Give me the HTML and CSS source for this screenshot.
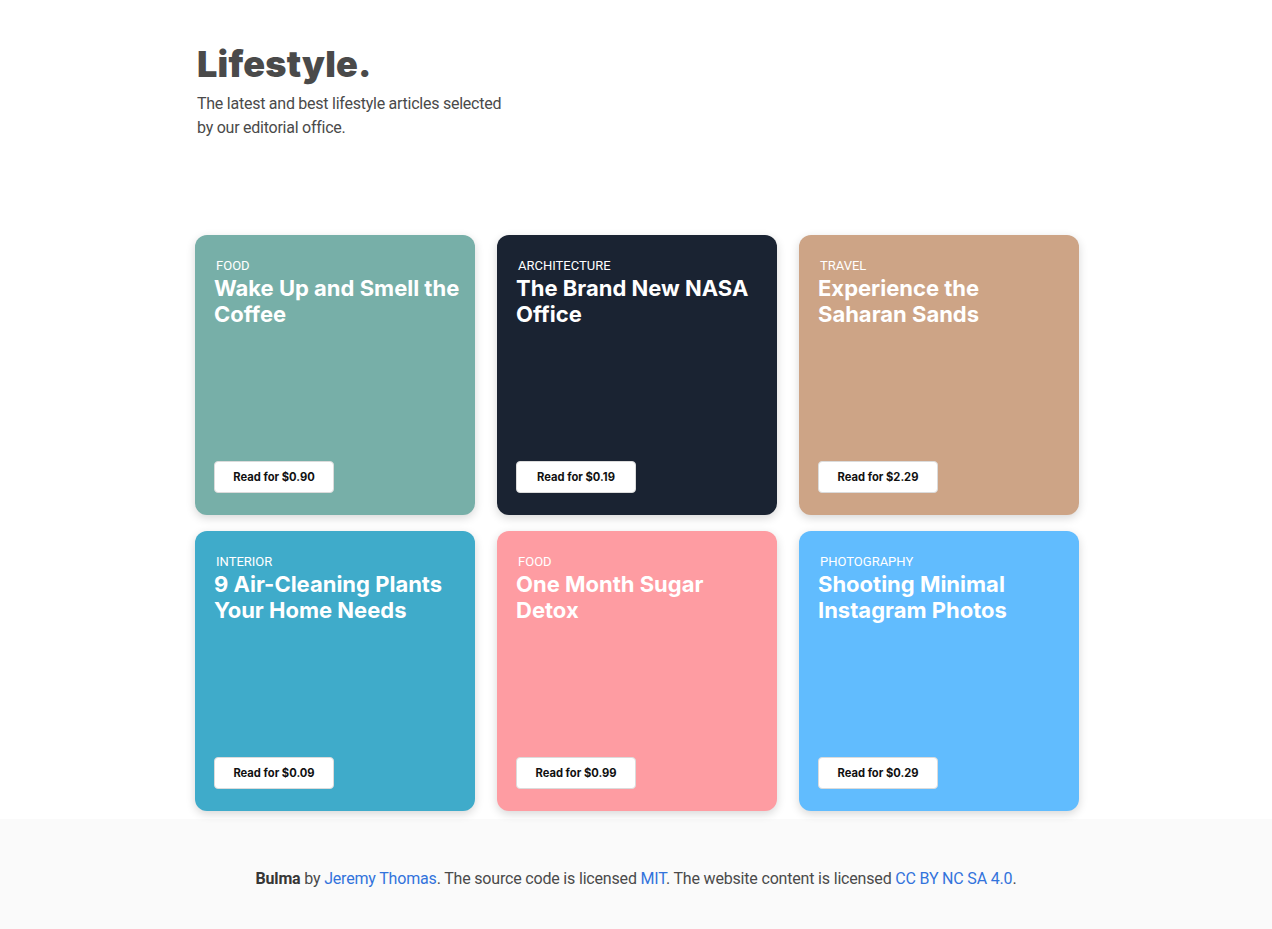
FILE: index.html
```html
<!DOCTYPE html>
<html lang="en">
<head>
<meta charset="utf-8">
<title>Lifestyle.</title>
<link rel="stylesheet" href="styles.css">
</head>
<body>
<main class="page">
  <header class="intro">
    <h1 class="intro-title">Lifestyle.</h1>
    <p class="intro-text">The latest and best lifestyle articles selected by our editorial office.</p>
  </header>
  <section class="grid">
    <article class="card card-teal">
      <span class="card-cat">FOOD</span>
      <h2 class="card-title">Wake Up and Smell the Coffee</h2>
      <button class="card-btn">Read for $0.90</button>
    </article>
    <article class="card card-dark">
      <span class="card-cat">ARCHITECTURE</span>
      <h2 class="card-title">The Brand New NASA Office</h2>
      <button class="card-btn">Read for $0.19</button>
    </article>
    <article class="card card-tan">
      <span class="card-cat">TRAVEL</span>
      <h2 class="card-title">Experience the Saharan Sands</h2>
      <button class="card-btn">Read for $2.29</button>
    </article>
    <article class="card card-blue">
      <span class="card-cat">INTERIOR</span>
      <h2 class="card-title">9 Air-Cleaning Plants Your Home Needs</h2>
      <button class="card-btn">Read for $0.09</button>
    </article>
    <article class="card card-pink">
      <span class="card-cat">FOOD</span>
      <h2 class="card-title">One Month Sugar Detox</h2>
      <button class="card-btn">Read for $0.99</button>
    </article>
    <article class="card card-sky">
      <span class="card-cat">PHOTOGRAPHY</span>
      <h2 class="card-title">Shooting Minimal Instagram Photos</h2>
      <button class="card-btn">Read for $0.29</button>
    </article>
  </section>
</main>
<footer class="footer">
  <p><strong>Bulma</strong> by <a href="#">Jeremy Thomas</a>. The source code is licensed <a href="#">MIT</a>. The website content is licensed <a href="#">CC BY NC SA 4.0</a>.</p>
</footer>
</body>
</html>
```

FILE: styles.css
```css
* { box-sizing: border-box; }
html, body { margin: 0; padding: 0; }
body {
  font-family: Roboto, "Noto Sans", sans-serif;
  color: #4a4a4a;
  background: #fff;
  font-size: 16px;
  line-height: 24px;
}
.page {
  width: 886px;
  margin: 0 auto;
  padding: 40px 0 8px 2px;
}
.intro {
  padding-left: 2px;
  margin-bottom: 95px;
}
.intro-title {
  margin: 0;
  font-family: Inter, "Noto Sans", sans-serif;
  font-size: 36px;
  line-height: 48px;
  font-weight: 900;
  color: #4a4a4a;
  letter-spacing: 0.2px;
}
.intro-text {
  margin: 4px 0 0;
  width: 320px;
  font-size: 16px;
  line-height: 24px;
  letter-spacing: -0.25px;
}
.grid {
  display: grid;
  grid-template-columns: repeat(3, 280px);
  column-gap: 22px;
  row-gap: 16px;
}
.card {
  height: 280px;
  border-radius: 12px;
  padding: 23px 10px 22px 19px;
  display: flex;
  flex-direction: column;
  align-items: flex-start;
  color: #fff;
  box-shadow: 0 3px 10px rgba(0,0,0,0.16);
}
.card-cat {
  font-size: 13px;
  line-height: 16px;
  padding-left: 2px;
  font-weight: 400;
}
.card-title {
  margin: 1px 0 0;
  font-family: Inter, "Noto Sans", sans-serif;
  font-size: 22px;
  line-height: 26px;
  font-weight: 700;
  max-width: 250px;
}
.card-btn {
  margin-top: auto;
  width: 120px;
  height: 32px;
  background: #fff;
  border: 1px solid #dbdbdb;
  border-radius: 4px;
  font-family: Inter, "Noto Sans", sans-serif;
  font-size: 11.2px;
  font-weight: 700;
  color: #111;
  padding: 0;
}
.card-teal { background: #77afa8; }
.card-dark { background: #1a2332; }
.card-tan { background: #cda486; }
.card-blue { background: #3fabca; }
.card-pink { background: #fe9ca2; }
.card-sky { background: #61bcfe; }
.footer {
  background: #fafafa;
  padding: 48px 24px 96px;
  text-align: center;
  letter-spacing: -0.18px;
}
.footer p { margin: 0; }
.footer strong { color: #363636; font-weight: 700; }
.footer a { color: #3273dc; text-decoration: none; }
```
